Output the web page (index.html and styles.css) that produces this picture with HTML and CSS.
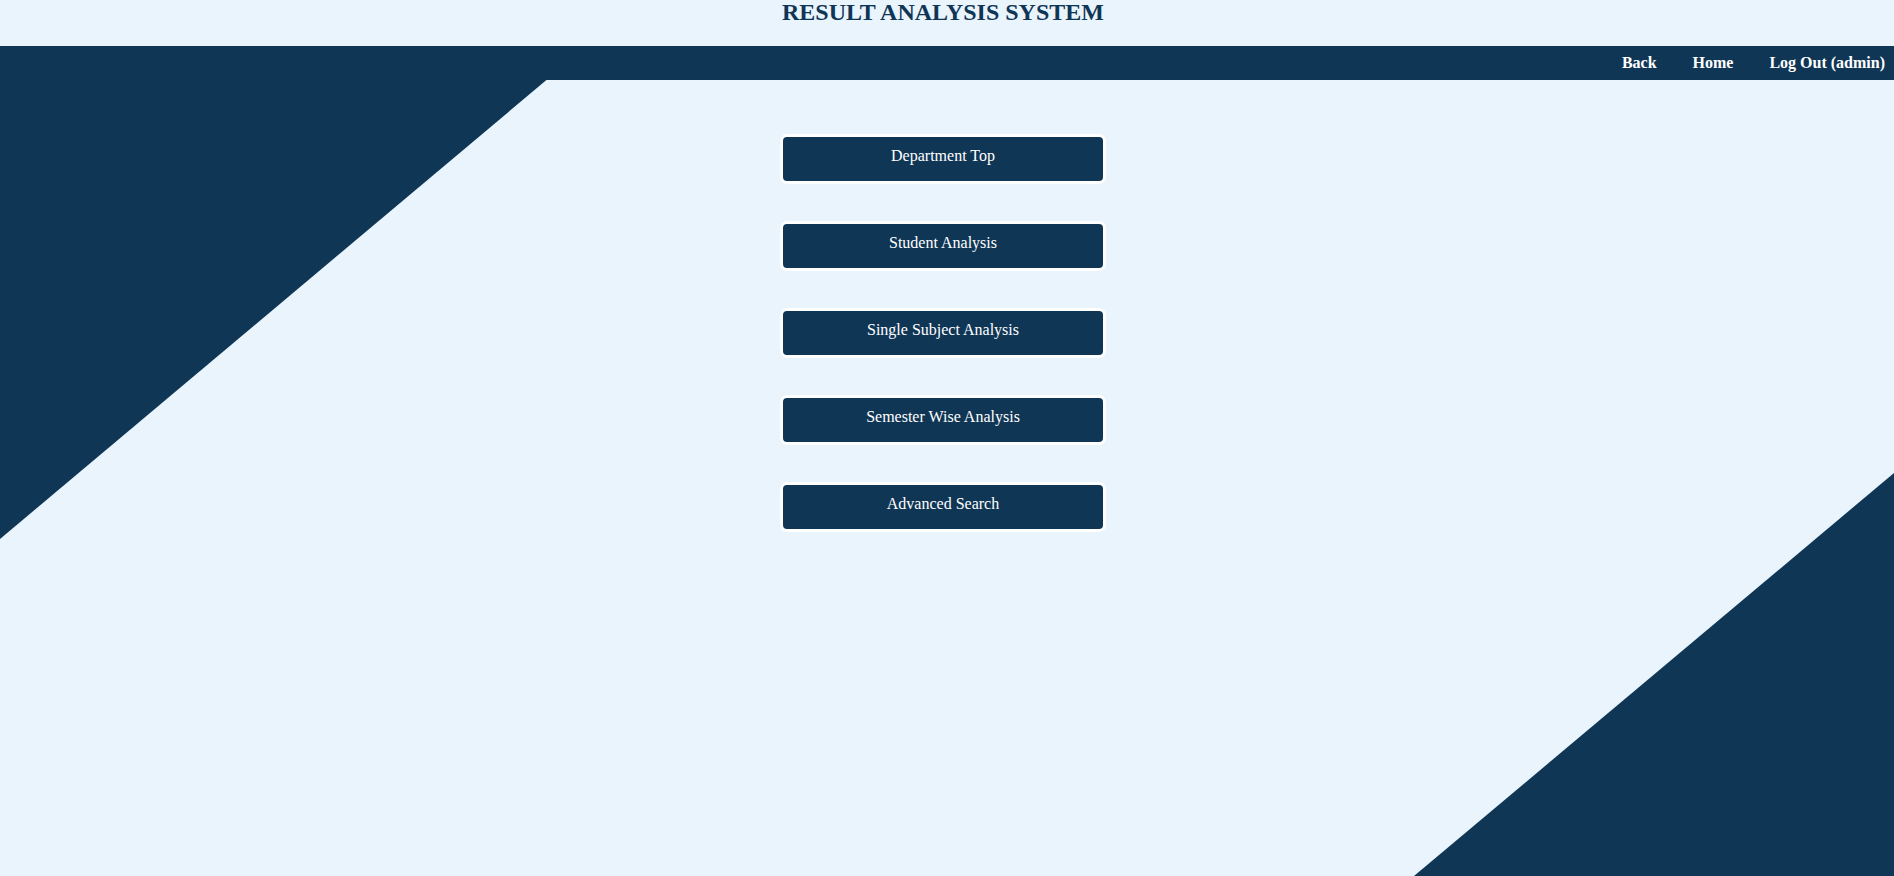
FILE: index.html
```html
<!DOCTYPE html>
<html lang="en">
<head>
<meta charset="utf-8">
<title>Result Analysis System</title>
<link rel="stylesheet" href="styles.css">
</head>
<body>
<svg class="decor" viewBox="0 0 1894 876" preserveAspectRatio="none" aria-hidden="true">
  <polygon points="0,46 587,46 0,539" fill="#103656"/>
  <polygon points="1894,473 1894,876 1414,876" fill="#103656"/>
</svg>
<header class="header">
  <h2 class="title">RESULT ANALYSIS SYSTEM</h2>
</header>
<nav class="navbar">
  <a class="nav-link" href="#">Back</a>
  <a class="nav-link" href="#">Home</a>
  <a class="nav-link" href="#">Log Out (admin)</a>
</nav>
<main class="menu">
  <a class="menu-btn" href="#">Department Top</a>
  <a class="menu-btn" href="#">Student Analysis</a>
  <a class="menu-btn" href="#">Single Subject Analysis</a>
  <a class="menu-btn" href="#">Semester Wise Analysis</a>
  <a class="menu-btn" href="#">Advanced Search</a>
</main>
</body>
</html>
```
FILE: styles.css
```css
html, body {
  margin: 0;
  padding: 0;
}
body {
  background: #e9f4fd;
  font-family: "Liberation Serif", "Times New Roman", serif;
  min-height: 876px;
  position: relative;
  overflow: hidden;
}
.decor {
  position: absolute;
  top: 0;
  left: 0;
  width: 1894px;
  height: 876px;
  z-index: 0;
}
.header {
  position: relative;
  z-index: 1;
  height: 46px;
  display: flex;
  justify-content: center;
  padding-right: 8px;
}
.title {
  margin: 0;
  font-size: 24px;
  line-height: 24px;
  font-weight: bold;
  color: #103656;
}
.navbar {
  position: relative;
  z-index: 1;
  height: 34px;
  background: #103656;
  display: flex;
  justify-content: flex-end;
  align-items: center;
  gap: 36px;
  padding-right: 9px;
}
.nav-link {
  color: #ffffff;
  font-weight: bold;
  font-size: 16px;
  text-decoration: none;
}
.menu {
  position: relative;
  z-index: 1;
  display: flex;
  flex-direction: column;
  align-items: center;
  gap: 37px;
  margin-top: 54px;
  padding-right: 8px;
}
.menu-btn {
  box-sizing: border-box;
  width: 326px;
  height: 50px;
  padding-top: 10px;
  border: 3px solid #ffffff;
  border-radius: 7px;
  background: #103656;
  color: #ffffff;
  font-size: 16px;
  text-align: center;
  text-decoration: none;
}
```
